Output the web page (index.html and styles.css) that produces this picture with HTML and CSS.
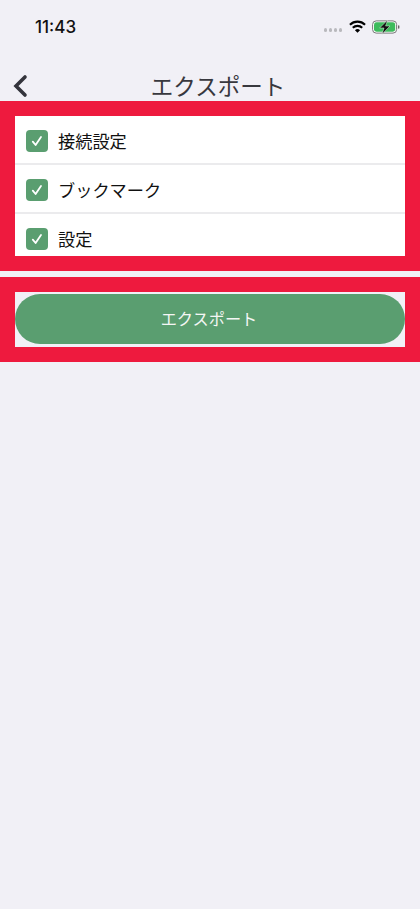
FILE: index.html
```html
<!DOCTYPE html>
<html lang="ja">
<head>
<meta charset="utf-8">
<title>エクスポート</title>
<link rel="stylesheet" href="styles.css">
</head>
<body>
<div class="status">
  <span class="time">11:43</span>
  <div class="status-icons">
    <div class="dots"><i></i><i></i><i></i><i></i></div>
    <svg class="wifi" width="17" height="14" viewBox="0 0 18 14">
      <path d="M1 4.6a11.4 11.4 0 0 1 16 0" fill="none" stroke="#000" stroke-width="2.2"/>
      <path d="M4 7.8a7.2 7.2 0 0 1 10 0" fill="none" stroke="#000" stroke-width="2.2"/>
      <path d="M6.3 10.4L9 13l2.7-2.6a3.9 3.9 0 0 0-5.4 0z" fill="#000"/>
    </svg>
    <svg class="battery" width="28" height="16" viewBox="0 0 28 16">
      <rect x="0.6" y="1.9" width="24" height="12.2" rx="3.6" fill="#fff" stroke="#777" stroke-width="1"/>
      <rect x="2" y="3.3" width="21.2" height="9.4" rx="2.4" fill="#3dbb5c"/>
      <rect x="26" y="6.2" width="1.4" height="3.6" rx="0.7" fill="#666"/>
      <path d="M15.6 1L7.6 9h4.4L10 15.2 18 7h-4.4z" fill="#111" stroke="#dff3e3" stroke-width="0.5"/>
    </svg>
  </div>
</div>
<header class="nav">
  <svg class="back" width="16" height="24" viewBox="0 0 16 24">
    <path d="M13 3L4 12l9 9" fill="none" stroke="#34343c" stroke-width="3.6" stroke-linecap="round" stroke-linejoin="miter"/>
  </svg>
  <h1 class="title">エクスポート</h1>
</header>
<section class="frame list-frame">
  <ul class="list">
    <li class="row">
      <span class="check"><svg width="14" height="14" viewBox="0 0 14 14"><path d="M2.8 7.6l2.8 3.4 5.4-8" fill="none" stroke="#fff" stroke-width="1.8" stroke-linecap="round" stroke-linejoin="round"/></svg></span>
      <span class="label">接続設定</span>
    </li>
    <li class="row">
      <span class="check"><svg width="14" height="14" viewBox="0 0 14 14"><path d="M2.8 7.6l2.8 3.4 5.4-8" fill="none" stroke="#fff" stroke-width="1.8" stroke-linecap="round" stroke-linejoin="round"/></svg></span>
      <span class="label">ブックマーク</span>
    </li>
    <li class="row">
      <span class="check"><svg width="14" height="14" viewBox="0 0 14 14"><path d="M2.8 7.6l2.8 3.4 5.4-8" fill="none" stroke="#fff" stroke-width="1.8" stroke-linecap="round" stroke-linejoin="round"/></svg></span>
      <span class="label">設定</span>
    </li>
  </ul>
</section>
<section class="frame button-frame">
  <button class="export" type="button">エクスポート</button>
</section>
</body>
</html>
```
FILE: styles.css
```css
* { box-sizing: border-box; }
html, body { margin: 0; padding: 0; }
body {
  width: 420px;
  height: 909px;
  overflow: hidden;
  background: #f1f0f6;
  font-family: "Noto Sans CJK JP", "Liberation Sans", sans-serif;
  color: #000;
}
.status {
  height: 54px;
  padding: 16px 20px 0 35px;
  display: flex;
  justify-content: space-between;
  align-items: flex-start;
}
.time {
  font-family: Inter, "Liberation Sans", sans-serif;
  font-size: 17px;
  font-weight: 500;
  line-height: 22px;
  color: #111;
}
.status-icons {
  display: flex;
  align-items: center;
  gap: 7px;
  height: 22px;
}
.dots { display: flex; gap: 1.5px; margin-top: 6px; }
.dots i { width: 3.5px; height: 3.5px; border-radius: 50%; background: #b9b9bd; display: block; }
.battery { margin-left: -1px; }
.nav {
  height: 47px;
  position: relative;
  display: flex;
  align-items: center;
  justify-content: center;
}
.back { position: absolute; left: 12px; top: 20px; }
.title {
  margin: 14px 0 0 16px;
  font-size: 22.5px;
  font-weight: 400;
  line-height: 32px;
  color: #38383e;
}
.frame {
  border: 15px solid #ee1a3e;
  background: #f1f0f6;
}
.list-frame { height: 170px; overflow: hidden; }
.list { list-style: none; margin: 0; padding: 0; height: 140px; overflow: hidden; background: #fff; }
.row {
  height: 49px;
  display: flex;
  align-items: center;
  gap: 10px;
  padding: 2px 0 0 11px;
  border-bottom: 2px solid #ebebed;
}
.row:last-child { border-bottom: 2px solid transparent; }
.check {
  width: 22px;
  height: 22px;
  border-radius: 4px;
  background: #5a9e70;
  display: flex;
  align-items: center;
  justify-content: center;
  flex: none;
}
.label { font-size: 17.2px; line-height: 24px; color: #111; }
.button-frame {
  margin-top: 6px;
  height: 85px;
  padding: 2px 0 3px;
}
.export {
  display: block;
  width: 100%;
  height: 50px;
  border: 0;
  border-radius: 25px;
  background: #5a9e70;
  color: #f4f6f4;
  font-family: inherit;
  font-size: 16.2px;
  font-weight: 400;
  padding: 0 2px 2px 0;
}
```
